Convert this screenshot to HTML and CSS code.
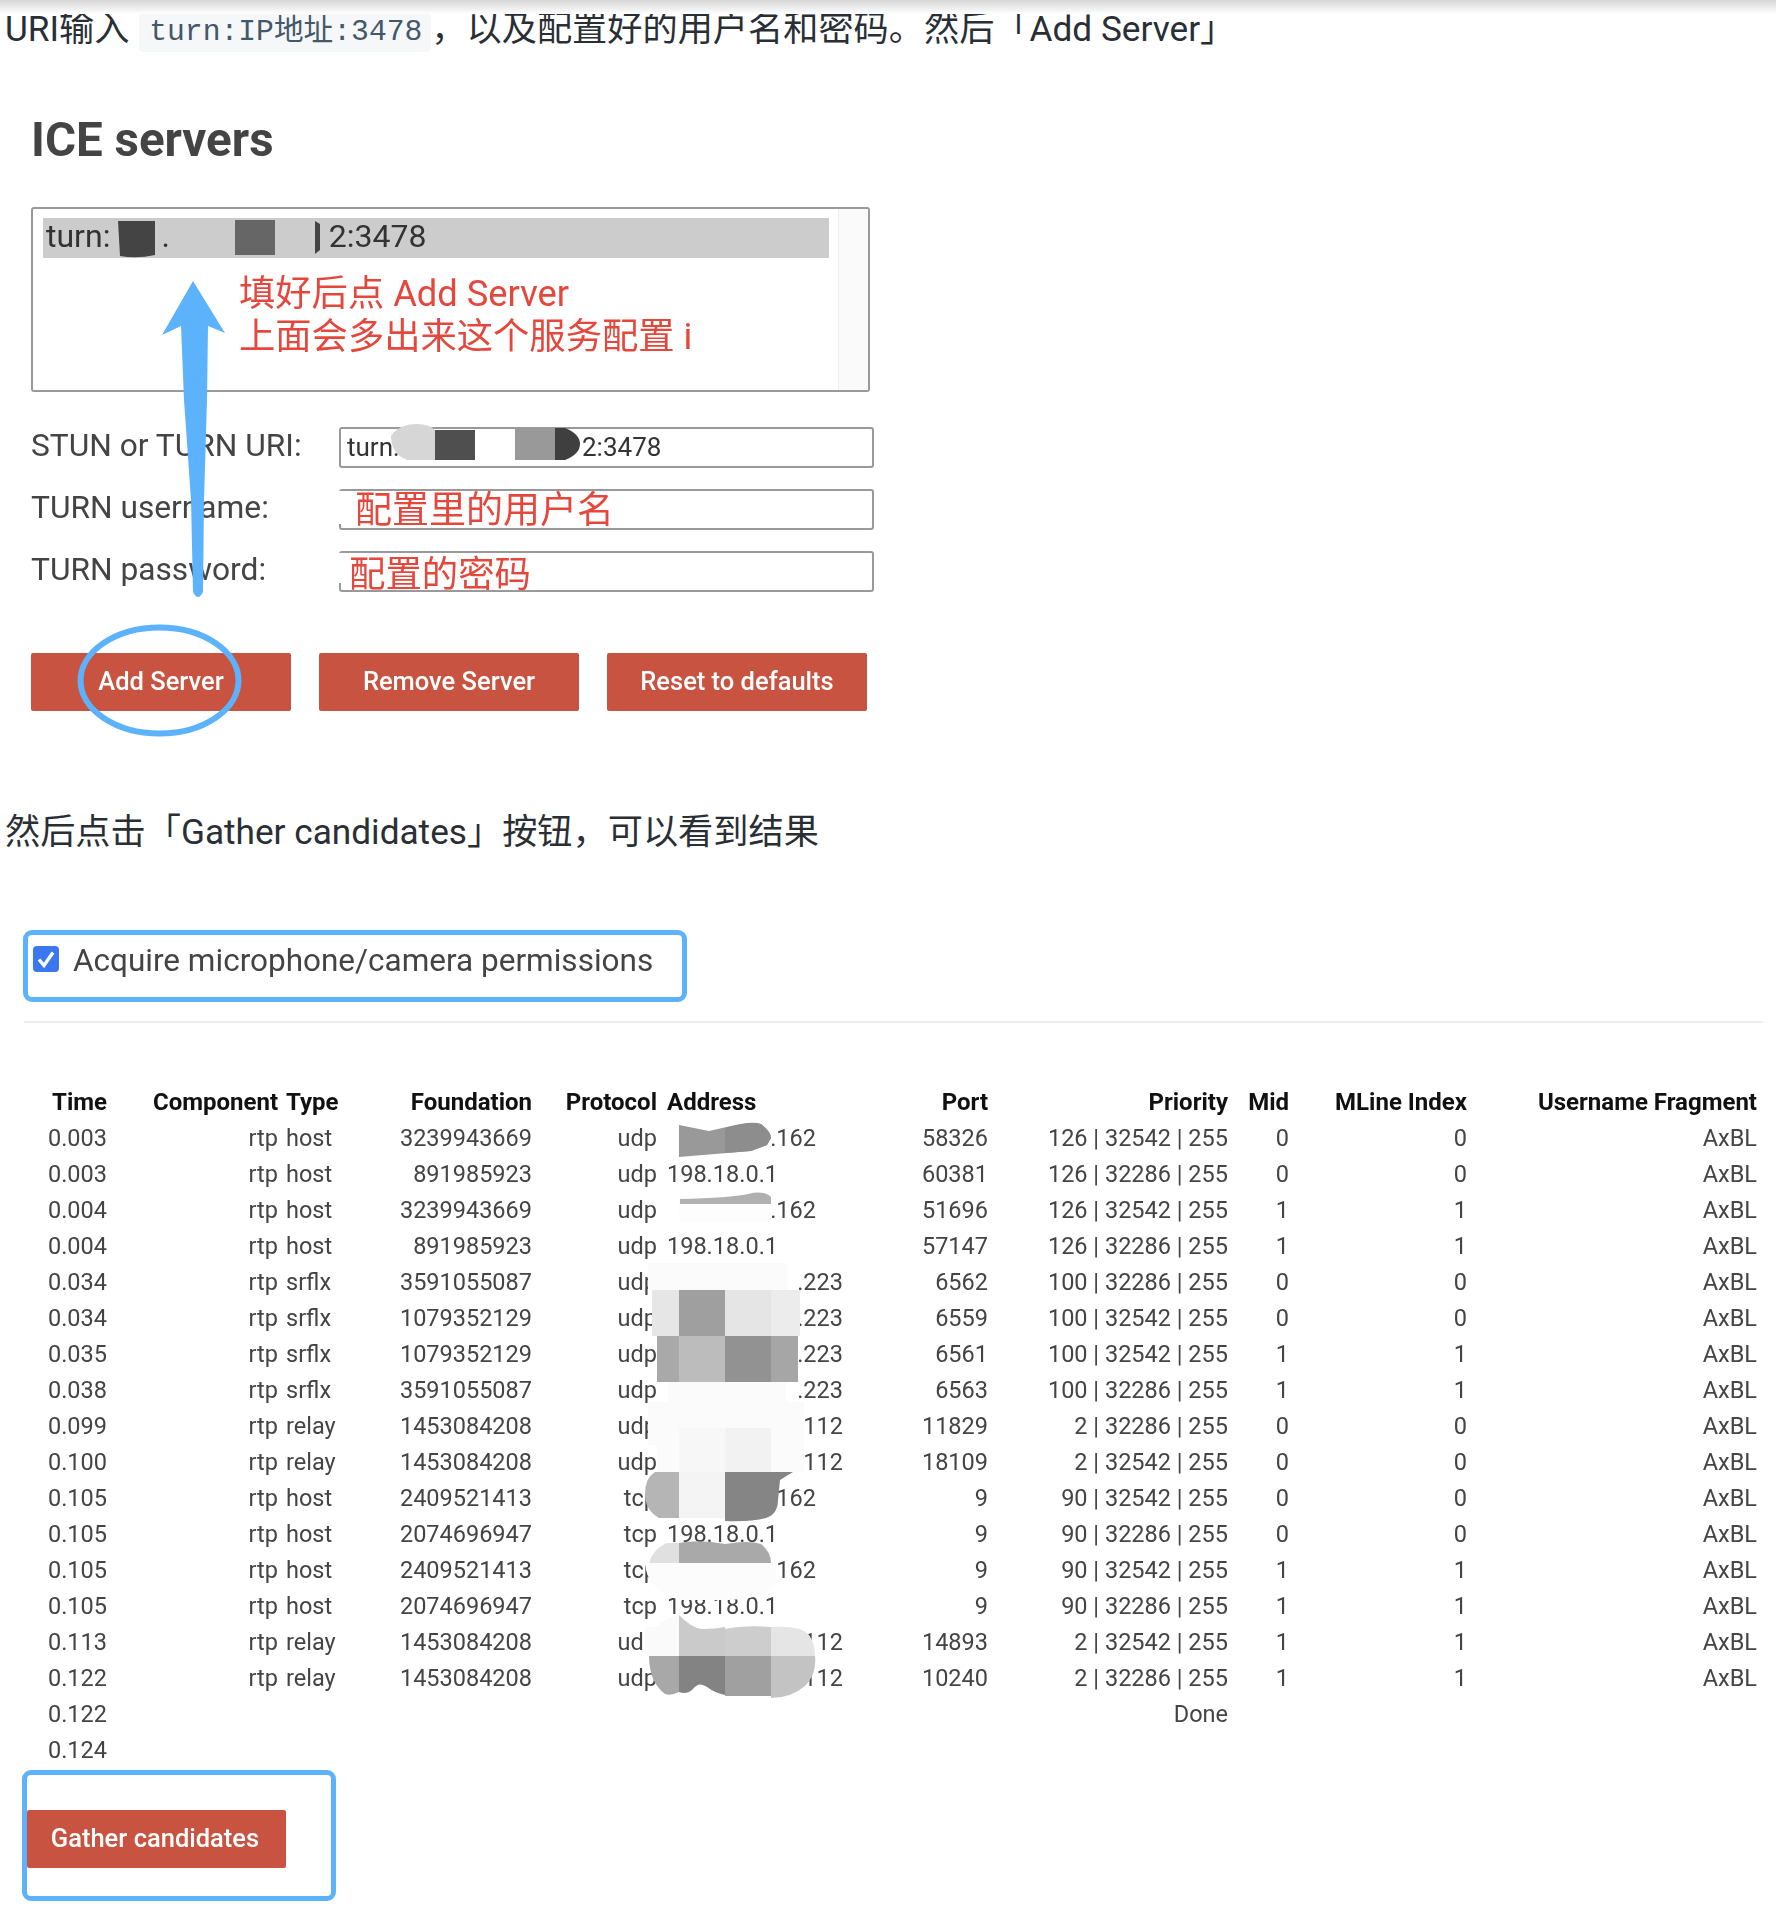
FILE: index.html
```html
<!DOCTYPE html>
<html lang="zh-CN">
<head>
<meta charset="utf-8">
<title>ICE servers</title>
<link rel="stylesheet" href="styles.css">
</head>
<body>
<div class="topshade"></div>
<p class="para first">URI输入 <code>turn:IP地址:3478</code>，以及配置好的用户名和密码。然后「Add Server」</p>

<section class="ice shot">
  <h2>ICE servers</h2>
  <div class="listbox">
    <div class="listcontent">
      <div class="selected"><span>turn:</span><span class="sel-dot">.</span><span class="sel-tail">2:3478</span></div>
      <div class="note"><div>填好后点 Add Server</div><div>上面会多出来这个服务配置 i</div></div>
    </div>
    <div class="scrollbar"></div>
  </div>
  <div class="form">
    <div class="row"><label>STUN or TURN URI:</label><div class="field"><span class="uri">turn:</span><span class="uri-tail">2:3478</span></div></div>
    <div class="row"><label>TURN username:</label><div class="field"><span class="hand hand-user">配置里的用户名</span></div></div>
    <div class="row"><label>TURN password:</label><div class="field"><span class="hand hand-pass">配置的密码</span></div></div>
  </div>
  <div class="buttons">
    <button class="btn">Add Server</button>
    <button class="btn">Remove Server</button>
    <button class="btn">Reset to defaults</button>
  </div>
</section>

<p class="para second">然后点击「Gather candidates」按钮，可以看到结果</p>

<section class="cand shot">
  <div class="perm"><span class="check"><svg viewBox="0 0 26 26" width="26" height="26"><path d="M6 13.5l5 6 9-13" fill="none" stroke="#fff" stroke-width="3.4"/></svg></span><span>Acquire microphone/camera permissions</span></div>
  <div class="rule"></div>
  <table>
    <colgroup><col class="c1"><col class="c2"><col class="c3"><col class="c4"><col class="c5"><col class="c6"><col class="c7"><col class="c8"><col class="c9"><col class="c10"><col class="c11"></colgroup>
    <thead><tr><th>Time</th><th>Component</th><th class="l">Type</th><th>Foundation</th><th>Protocol</th><th class="l">Address</th><th>Port</th><th>Priority</th><th>Mid</th><th>MLine Index</th><th>Username Fragment</th></tr></thead>
    <tbody>
      <tr><td>0.003</td><td>rtp</td><td class="l">host</td><td>3239943669</td><td>udp</td><td class="l"><span class="t162">.162</span></td><td>58326</td><td>126 | 32542 | 255</td><td>0</td><td>0</td><td>AxBL</td></tr>
      <tr><td>0.003</td><td>rtp</td><td class="l">host</td><td>891985923</td><td>udp</td><td class="l">198.18.0.1</td><td>60381</td><td>126 | 32286 | 255</td><td>0</td><td>0</td><td>AxBL</td></tr>
      <tr><td>0.004</td><td>rtp</td><td class="l">host</td><td>3239943669</td><td>udp</td><td class="l"><span class="t162">.162</span></td><td>51696</td><td>126 | 32542 | 255</td><td>1</td><td>1</td><td>AxBL</td></tr>
      <tr><td>0.004</td><td>rtp</td><td class="l">host</td><td>891985923</td><td>udp</td><td class="l">198.18.0.1</td><td>57147</td><td>126 | 32286 | 255</td><td>1</td><td>1</td><td>AxBL</td></tr>
      <tr><td>0.034</td><td>rtp</td><td class="l">srflx</td><td>3591055087</td><td>udp</td><td class="l"><span class="t223">.223</span></td><td>6562</td><td>100 | 32286 | 255</td><td>0</td><td>0</td><td>AxBL</td></tr>
      <tr><td>0.034</td><td>rtp</td><td class="l">srflx</td><td>1079352129</td><td>udp</td><td class="l"><span class="t223">.223</span></td><td>6559</td><td>100 | 32542 | 255</td><td>0</td><td>0</td><td>AxBL</td></tr>
      <tr><td>0.035</td><td>rtp</td><td class="l">srflx</td><td>1079352129</td><td>udp</td><td class="l"><span class="t223">.223</span></td><td>6561</td><td>100 | 32542 | 255</td><td>1</td><td>1</td><td>AxBL</td></tr>
      <tr><td>0.038</td><td>rtp</td><td class="l">srflx</td><td>3591055087</td><td>udp</td><td class="l"><span class="t223">.223</span></td><td>6563</td><td>100 | 32286 | 255</td><td>1</td><td>1</td><td>AxBL</td></tr>
      <tr><td>0.099</td><td>rtp</td><td class="l">relay</td><td>1453084208</td><td>udp</td><td class="l"><span class="t223">.112</span></td><td>11829</td><td>2 | 32286 | 255</td><td>0</td><td>0</td><td>AxBL</td></tr>
      <tr><td>0.100</td><td>rtp</td><td class="l">relay</td><td>1453084208</td><td>udp</td><td class="l"><span class="t223">.112</span></td><td>18109</td><td>2 | 32542 | 255</td><td>0</td><td>0</td><td>AxBL</td></tr>
      <tr><td>0.105</td><td>rtp</td><td class="l">host</td><td>2409521413</td><td>tcp</td><td class="l"><span class="t162">.162</span></td><td>9</td><td>90 | 32542 | 255</td><td>0</td><td>0</td><td>AxBL</td></tr>
      <tr><td>0.105</td><td>rtp</td><td class="l">host</td><td>2074696947</td><td>tcp</td><td class="l">198.18.0.1</td><td>9</td><td>90 | 32286 | 255</td><td>0</td><td>0</td><td>AxBL</td></tr>
      <tr><td>0.105</td><td>rtp</td><td class="l">host</td><td>2409521413</td><td>tcp</td><td class="l"><span class="t162">.162</span></td><td>9</td><td>90 | 32542 | 255</td><td>1</td><td>1</td><td>AxBL</td></tr>
      <tr><td>0.105</td><td>rtp</td><td class="l">host</td><td>2074696947</td><td>tcp</td><td class="l">198.18.0.1</td><td>9</td><td>90 | 32286 | 255</td><td>1</td><td>1</td><td>AxBL</td></tr>
      <tr><td>0.113</td><td>rtp</td><td class="l">relay</td><td>1453084208</td><td>udp</td><td class="l"><span class="t223">.112</span></td><td>14893</td><td>2 | 32542 | 255</td><td>1</td><td>1</td><td>AxBL</td></tr>
      <tr><td>0.122</td><td>rtp</td><td class="l">relay</td><td>1453084208</td><td>udp</td><td class="l"><span class="t223">.112</span></td><td>10240</td><td>2 | 32286 | 255</td><td>1</td><td>1</td><td>AxBL</td></tr>
      <tr><td>0.122</td><td></td><td></td><td></td><td></td><td></td><td></td><td>Done</td><td></td><td></td><td></td></tr>
      <tr><td>0.124</td><td></td><td></td><td></td><td></td><td></td><td></td><td></td><td></td><td></td><td></td></tr>
    </tbody>
  </table>
  <div class="gather"><button class="btn">Gather candidates</button></div>
</section>

<svg class="overlay" viewBox="0 0 1776 1910" width="1776" height="1910" aria-hidden="true">
  <path d="M118 221h37v34q-18 4-35 1z" fill="#444"/>
  <rect x="235" y="220" width="40" height="35" fill="#666"/>
  <path d="M315 221l5 3v26l-5 4z" fill="#444"/>
  <path d="M391 436q8-12 26-12 12 0 18 6v30h-28q-16-6-16-24z" fill="#d6d6d6"/>
  <rect x="435" y="430" width="40" height="30" fill="#4f4f4f"/>
  <rect x="515" y="429" width="40" height="31" fill="#999"/>
  <path d="M555 428h10q15 6 15 16t-15 16h-10z" fill="#3f3f3f"/>
  <path d="M193 281L225 333 208 326 207 400 204 500 203 592Q198 602 193 592L191 500 184 400 181 326 162 335z" fill="#5db3fb"/>
  <ellipse cx="159.500" cy="680.500" rx="79" ry="53" fill="none" stroke="#5db3fb" stroke-width="6"/>
  <path d="M679 1125l30 6 22-5q20-4 30-2 10 8 10 14l-4 7-16 6-36 3-36 3z" fill="#999"/>
  <path d="M725 1128q26-8 36-4 10 8 10 14l-4 7-16 6-26 2z" fill="#8d8d8d"/>
  <rect x="679" y="1198" width="92" height="24" fill="#fdfdfd"/>
  <path d="M680 1199q50-1 68-5 16-4 23 3v7h-91z" fill="#b0b0b0"/>
  <rect x="648" y="1263" width="139" height="27" fill="#fbfbfb"/>
  <rect x="652" y="1290" width="27" height="46" fill="#e6e6e6"/>
  <rect x="679" y="1290" width="46" height="46" fill="#9f9f9f"/>
  <rect x="725" y="1290" width="46" height="46" fill="#e5e5e5"/>
  <rect x="771" y="1290" width="29" height="46" fill="#ececec"/>
  <rect x="657" y="1336" width="22" height="46" fill="#a9a9a9"/>
  <rect x="679" y="1336" width="46" height="46" fill="#bcbcbc"/>
  <rect x="725" y="1336" width="46" height="46" fill="#929292"/>
  <rect x="771" y="1336" width="27" height="46" fill="#a6a6a6"/>
  <rect x="668" y="1382" width="118" height="20" fill="#fbfbfb"/>
  <rect x="648" y="1402" width="156" height="43" fill="#fbfbfb"/>
  <rect x="657" y="1445" width="147" height="27" fill="#fbfbfb"/>
  <rect x="679" y="1428" width="46" height="44" fill="#f7f7f7"/>
  <rect x="725" y="1428" width="46" height="44" fill="#f2f2f2"/>
  <path d="M679 1472h-24q-10 6-10 22 0 16 14 24h20z" fill="#b5b5b5"/>
  <rect x="679" y="1472" width="46" height="46" fill="#f4f4f4"/>
  <path d="M725 1472h68l-13 8-2 20q0 14-12 18-16 4-41 3z" fill="#858585"/>
  <path d="M679 1543h-12q-14 6-18 20h30z" fill="#e0e0e0"/>
  <path d="M679 1543q20-4 46 1 24-4 36 0 10 8 10 19h-92z" fill="#a9a9a9"/>
  <path d="M645 1563h131v18q-6 19-55 19h-40q-34-8-36-37z" fill="#fcfcfc"/>
  <path d="M679 1615q-14 3-22 12h-12v29h34z" fill="#fafafa"/>
  <path d="M679 1615q14 14 24 14 12 0 22 -2v29h-46z" fill="#cacaca"/>
  <path d="M725 1629q20-4 46-2v29h-46z" fill="#cdcdcd"/>
  <path d="M771 1627q30-2 38 8 6 8 6 21h-44z" fill="#e5e5e5"/>
  <path d="M649 1656h30v36q-8 4-14 2-16-12-16-38z" fill="#a8a8a8"/>
  <path d="M679 1656h46v39q-10-2-18-8-8-6-14 2-6 6-14 3z" fill="#838383"/>
  <rect x="725" y="1656" width="46" height="40" fill="#a0a0a0"/>
  <path d="M771 1656h44q2 18-10 30-14 12-34 12z" fill="#c3c3c3"/>
</svg>
</body>
</html>
```
FILE: styles.css
```css
* { box-sizing: border-box; }
html, body { margin: 0; padding: 0; background: #fff; }
body {
  position: relative;
  width: 1776px;
  height: 1910px;
  overflow: hidden;
  font-family: Roboto, "Noto Sans CJK SC", sans-serif;
}
.topshade {
  position: absolute;
  left: 0;
  top: 0;
  width: 100%;
  height: 14px;
  background: linear-gradient(#d6d6d6, #ffffff);
}
.para {
  margin: 0;
  padding-left: 5px;
  height: 58px;
  line-height: 60px;
  font-size: 35.2px;
  color: #2a2f35;
  white-space: nowrap;
}
.first { line-height: 59px; }
.para code {
  display: inline-block;
  height: 39px;
  line-height: 39px;
  padding: 0 9px 0 10px;
  margin: 0 0 0 1px;
  font-family: "Liberation Mono", "Noto Sans CJK SC", monospace;
  font-size: 29.7px;
  color: #44586a;
  background: #f6f7f8;
  border-radius: 4px;
  vertical-align: 1px;
}
.shot { filter: blur(0.7px); }
.ice { padding-left: 31px; }
.ice h2 {
  margin: 54px 0 0;
  height: 56px;
  line-height: 56px;
  font-size: 47.5px;
  font-weight: 700;
  color: #444;
}
.listbox {
  display: flex;
  width: 839px;
  height: 185px;
  margin-top: 39px;
  border: 2px solid #999;
  border-radius: 3px;
}
.listcontent { flex: 1; padding: 9px 9px 0 10px; }
.scrollbar { width: 30px; background: #fafafa; border-left: 1px solid #eee; }
.selected {
  height: 40px;
  line-height: 36px;
  padding-left: 3px;
  background: #ccc;
  font-size: 32px;
  color: #333;
}
.sel-dot { margin-left: 51px; }
.sel-tail { margin-left: 159px; }
.note {
  margin: 14px 0 0 196px;
  font-size: 36.3px;
  line-height: 43px;
  color: #e5473c;
  white-space: nowrap;
}
.form { display: flex; flex-direction: column; gap: 21px; margin-top: 35px; }
.row { display: flex; align-items: center; height: 41px; }
.row label {
  width: 308px;
  font-size: 31.7px;
  color: #444;
  white-space: nowrap;
  position: relative;
  top: -2px;
}
.field {
  width: 535px;
  height: 41px;
  border: 2px solid #999;
  border-radius: 3px;
  white-space: nowrap;
  background: #fff;
}
.uri { display: inline-block; width: 241px; padding-left: 6px; font-size: 26px; line-height: 37px; color: #333; }
.uri-tail { font-size: 26px; line-height: 37px; color: #333; }
.hand {
  display: block;
  width: max-content;
  color: #e5473c;
  background: #fff;
  margin-left: -2px;
  height: 33px;
  line-height: 39px;
}
.hand-user { padding-left: 16px; font-size: 37px; }
.hand-pass { padding-left: 10px; font-size: 36.4px; height: 30px; line-height: 43px; }
.buttons { display: flex; gap: 28px; margin-top: 61px; }
.btn {
  display: block;
  width: 260px;
  height: 58px;
  padding: 0 0 3px;
  border: 0;
  border-radius: 2px;
  background: #c75340;
  color: #fff;
  font-family: Roboto, sans-serif;
  font-size: 25.5px;
  font-weight: 500;
}
.second { margin-top: 91px; }
.cand { margin-top: 70px; padding-left: 24px; }
.perm {
  display: flex;
  align-items: flex-start;
  gap: 14px;
  width: 664px;
  height: 72px;
  margin-left: -1px;
  padding: 11px 0 0 5px;
  border: 5px solid #5db3fb;
  border-radius: 9px;
  font-size: 31.5px;
  line-height: 29px;
  color: #444;
  white-space: nowrap;
}
.check {
  display: block;
  width: 26px;
  height: 26px;
  border-radius: 4px;
  background: #3b78f0;
  flex: none;
}
.check svg { display: block; }
.rule { width: 1739px; height: 2px; margin-top: 19px; background: #eee; }
table {
  margin-top: 61px;
  width: 1733px;
  border-collapse: collapse;
  table-layout: fixed;
  font-size: 23.5px;
  color: #444;
}
th, td { height: 36px; padding: 0; text-align: right; white-space: nowrap; font-weight: 400; }
th { font-weight: 700; font-size: 24px; color: #111; }
th.l, td.l { text-align: left; }
td.l:nth-child(3), th.l:nth-child(3) { padding-left: 8px; }
td.l:nth-child(6), th.l:nth-child(6) { padding-left: 10px; }
.c1 { width: 83px; }
.c2 { width: 171px; }
.c3 { width: 62px; }
.c4 { width: 192px; }
.c5 { width: 125px; }
.c6 { width: 153px; }
.c7 { width: 178px; }
.c8 { width: 240px; }
.c9 { width: 61px; }
.c10 { width: 178px; }
.c11 { width: 290px; }
.t162, .t223 { display: inline-block; text-align: right; }
.t162 { width: 149px; }
.t223 { width: 176px; }
.gather {
  width: 314px;
  height: 131px;
  margin: 2px 0 0 -2px;
  padding: 35px 0 0 0;
  border: 5px solid #5db3fb;
  border-radius: 9px;
}
.gather .btn { width: 259px; padding-right: 3px; }
.overlay {
  position: absolute;
  left: 0;
  top: 0;
  filter: blur(0.7px);
  pointer-events: none;
}
```
